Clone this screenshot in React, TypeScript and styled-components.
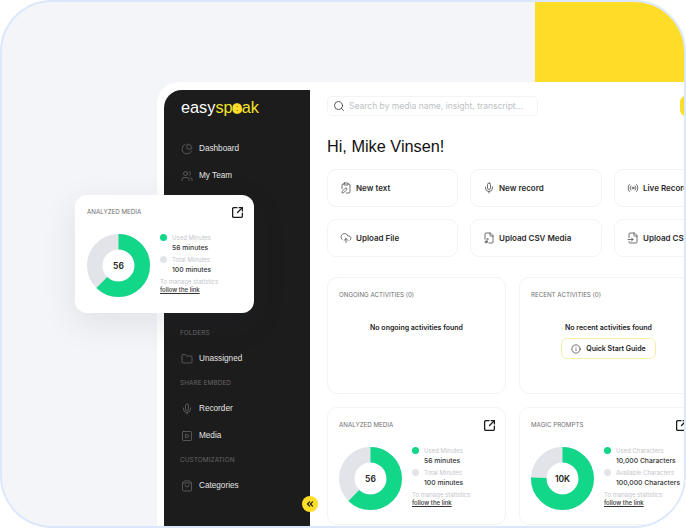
import React from "react";
import styled, { createGlobalStyle } from "styled-components";
import {
  ChevronsLeft,
  CloudUpload,
  FileMusic,
  FileInput,
  Folder,
  Info,
  Mic,
  PieChart,
  Radio,
  Search,
  ShoppingBag,
  SquareArrowOutUpRight,
  SquarePlay,
  ClipboardPen,
  Users,
} from "lucide-react";

const GlobalStyle = createGlobalStyle`
  html, body {
    margin: 0;
    padding: 0;
    background: #ffffff;
  }
  body {
    font-family: Inter, "Liberation Sans", sans-serif;
  }
  * {
    box-sizing: border-box;
  }
`;

const Frame = styled.div`
  position: relative;
  width: 686px;
  height: 528px;
  padding: 80px 0 0 155px;
  overflow: hidden;
  background: #f4f5f8;
  border: 2px solid #dbe8fb;
  border-radius: 52px;
`;

const YellowBlock = styled.div`
  position: absolute;
  top: 0;
  right: 0;
  width: 149px;
  height: 80px;
  background: #fedd29;
`;

const AppWindow = styled.div`
  position: relative;
  display: flex;
  width: 540px;
  height: 446px;
  padding: 8px 0 0 7px;
  background: #ffffff;
  border-top-left-radius: 22px;
`;

const Sidebar = styled.aside`
  flex: none;
  width: 146px;
  padding: 7px 0 0 16px;
  background: #1c1c1c;
  border-top-left-radius: 18px;
`;

const Logo = styled.div`
  height: 20px;
  padding-left: 1px;
  font-family: "Liberation Sans", sans-serif;
  font-size: 16.3px;
  line-height: 20px;
  color: #ffffff;
  span {
    color: #f3e32b;
  }
  b {
    font-weight: 700;
    color: #fedd29;
    -webkit-text-stroke: 1.6px #fedd29;
  }
`;

const NavItem = styled.div`
  display: flex;
  align-items: center;
  gap: 6px;
  height: 27px;
  padding-left: 1px;
  font-family: "Liberation Sans", sans-serif;
  font-size: 8.2px;
  color: #e4e4e4;
  svg {
    flex: none;
    width: 12px;
    height: 12px;
    color: #767676;
  }
`;

const NavGroup = styled.nav<{ $top: number }>`
  margin-top: ${(p) => p.$top}px;
`;

const NavLabel = styled.div`
  height: 23px;
  line-height: 23px;
  font-size: 6.4px;
  letter-spacing: 0.1px;
  color: #666666;
`;

const CollapseButton = styled.div`
  position: absolute;
  left: 145px;
  top: 414px;
  display: flex;
  align-items: center;
  justify-content: center;
  width: 16px;
  height: 16px;
  border-radius: 50%;
  background: #fedd29;
  color: #1c1c1c;
  svg {
    width: 10px;
    height: 10px;
  }
`;

const Main = styled.main`
  flex: none;
  width: 387px;
  padding: 6px 0 0 17px;
`;

const TopBar = styled.div`
  display: flex;
  align-items: center;
  gap: 142px;
`;

const SearchBox = styled.div`
  display: flex;
  align-items: center;
  gap: 4px;
  flex: none;
  width: 211px;
  height: 20px;
  padding-left: 5px;
  background: #ffffff;
  border: 1px solid #f2f3f5;
  border-radius: 5px;
  font-size: 8.5px;
  white-space: nowrap;
  color: #bcbfc4;
  svg {
    flex: none;
    width: 12px;
    height: 12px;
    color: #333333;
  }
`;

const NotifyPill = styled.div`
  flex: none;
  width: 30px;
  height: 20px;
  background: #fedd29;
  border-radius: 6px;
`;

const Greeting = styled.h1`
  margin: 19px 0 12px;
  font-family: "Liberation Sans", sans-serif;
  font-size: 16.3px;
  line-height: 22px;
  font-weight: 400;
  color: #111111;
`;

const ActionGrid = styled.div`
  display: grid;
  grid-template-columns: 131px 132px 132px;
  grid-auto-rows: 38px;
  gap: 12px;
`;

const ActionCard = styled.div`
  display: flex;
  align-items: center;
  gap: 4px;
  padding-left: 12px;
  overflow: hidden;
  background: #ffffff;
  border: 1px solid #f2f3f5;
  border-radius: 9px;
  font-size: 8px;
  font-weight: 600;
  white-space: nowrap;
  color: #2b2b2b;
  svg {
    flex: none;
    width: 12px;
    height: 12px;
    color: #444444;
  }
`;

const PanelGrid = styled.div`
  display: grid;
  grid-template-columns: 179px 179px;
  grid-template-rows: 117px 118px;
  gap: 13px;
  margin-top: 20px;
`;

const Panel = styled.section`
  padding: 12px 11px;
  background: #ffffff;
  border: 1px solid #f2f3f5;
  border-radius: 10px;
`;

const PanelTitle = styled.div`
  font-size: 6.2px;
  line-height: 10px;
  color: #707070;
`;

const EmptyState = styled.div`
  display: flex;
  flex-direction: column;
  align-items: center;
  margin-top: 22px;
  font-size: 7px;
  line-height: 12px;
  font-weight: 600;
  color: #222222;
`;

const GuideButton = styled.div`
  display: flex;
  align-items: center;
  justify-content: center;
  gap: 5px;
  width: 95px;
  height: 21px;
  margin-top: 4px;
  border: 1px solid #f8edaa;
  border-radius: 6px;
  svg {
    width: 10px;
    height: 10px;
  }
`;

const StatCard = styled.section<{ $floating?: boolean }>`
  padding: 11px;
  background: #ffffff;
  border-radius: ${(p) => (p.$floating ? "12px" : "10px")};
  border: ${(p) => (p.$floating ? "none" : "1px solid #f2f3f5")};
  ${(p) =>
    p.$floating &&
    `
    position: absolute;
    left: 73px;
    top: 193px;
    width: 179px;
    height: 118px;
    padding: 11px 12px;
    box-shadow: 0 10px 34px rgba(40, 50, 80, 0.1);
  `}
`;

const StatHead = styled.div`
  display: flex;
  align-items: center;
  justify-content: space-between;
  height: 12px;
  svg {
    width: 13px;
    height: 13px;
    margin-right: -1.5px;
    color: #1a1a1a;
  }
`;

const StatBody = styled.div`
  display: flex;
  gap: 10px;
  margin-top: 16px;
`;

const DonutWrap = styled.div`
  position: relative;
  flex: none;
  width: 63px;
  height: 63px;
`;

const DonutValue = styled.div`
  position: absolute;
  inset: 0;
  display: flex;
  align-items: center;
  justify-content: center;
  font-size: 8.5px;
  font-weight: 600;
  color: #222222;
`;

const Legend = styled.div`
  margin-top: -1px;
  white-space: nowrap;
`;

const LegendLabel = styled.div<{ $on?: boolean }>`
  display: flex;
  align-items: center;
  gap: 5px;
  height: 8px;
  font-size: 6px;
  color: #c4c6ca;
  &::before {
    content: "";
    width: 7px;
    height: 7px;
    border-radius: 50%;
    background: ${(p) => (p.$on ? "#12d688" : "#e2e4ea")};
  }
`;

const LegendValue = styled.div`
  height: 12px;
  margin-bottom: 2px;
  padding-left: 12px;
  font-size: 6.8px;
  line-height: 14px;
  font-weight: 500;
  color: #333333;
`;

const LegendNote = styled.div`
  margin-top: 3px;
  font-size: 6px;
  line-height: 8px;
  color: #c4c6ca;
`;

const LegendLink = styled.div`
  font-size: 6px;
  line-height: 8px;
  font-weight: 500;
  color: #333333;
  text-decoration: underline;
`;

const Donut = ({ percent, value }: { percent: number; value: string }) => {
  const r = 23.75;
  const c = 2 * Math.PI * r;
  return (
    <DonutWrap>
      <svg width="63" height="63" viewBox="0 0 63 63">
        <circle cx="31.5" cy="31.5" r={r} fill="none" stroke="#e2e4ea" strokeWidth="15.5" />
        <circle
          cx="31.5"
          cy="31.5"
          r={r}
          fill="none"
          stroke="#12d688"
          strokeWidth="15.5"
          strokeDasharray={`${(c * percent) / 100} ${c}`}
          transform="rotate(-90 31.5 31.5)"
        />
      </svg>
      <DonutValue>{value}</DonutValue>
    </DonutWrap>
  );
};

type StatProps = {
  title: string;
  percent: number;
  value: string;
  usedLabel: string;
  used: string;
  totalLabel: string;
  total: string;
  floating?: boolean;
};

const Stat = (props: StatProps) => (
  <StatCard $floating={props.floating}>
    <StatHead>
      <PanelTitle>{props.title}</PanelTitle>
      <SquareArrowOutUpRight strokeWidth={2.4} />
    </StatHead>
    <StatBody>
      <Donut percent={props.percent} value={props.value} />
      <Legend>
        <LegendLabel $on>{props.usedLabel}</LegendLabel>
        <LegendValue>{props.used}</LegendValue>
        <LegendLabel>{props.totalLabel}</LegendLabel>
        <LegendValue>{props.total}</LegendValue>
        <LegendNote>To manage statistics</LegendNote>
        <LegendLink>follow the link</LegendLink>
      </Legend>
    </StatBody>
  </StatCard>
);

const minutes = {
  title: "ANALYZED MEDIA",
  percent: 62,
  value: "56",
  usedLabel: "Used Minutes",
  used: "56 minutes",
  totalLabel: "Total Minutes",
  total: "100 minutes",
};

export default function App() {
  return (
    <>
      <GlobalStyle />
      <Frame>
        <YellowBlock />
        <AppWindow>
          <Sidebar>
            <Logo>
              easy<span>sp</span>
              <b>e</b>
              <span>ak</span>
            </Logo>
            <NavGroup $top={18}>
              <NavItem>
                <PieChart strokeWidth={1.3} />
                Dashboard
              </NavItem>
              <NavItem>
                <Users strokeWidth={1.3} />
                My Team
              </NavItem>
            </NavGroup>
            <NavGroup $top={133}>
              <NavLabel>FOLDERS</NavLabel>
              <NavItem>
                <Folder strokeWidth={1.3} />
                Unassigned
              </NavItem>
              <NavLabel>SHARE EMBDED</NavLabel>
              <NavItem>
                <Mic strokeWidth={1.3} />
                Recorder
              </NavItem>
              <NavItem>
                <SquarePlay strokeWidth={1.3} />
                Media
              </NavItem>
              <NavLabel>CUSTOMIZATION</NavLabel>
              <NavItem>
                <ShoppingBag strokeWidth={1.3} />
                Categories
              </NavItem>
            </NavGroup>
          </Sidebar>
          <CollapseButton>
            <ChevronsLeft strokeWidth={3} />
          </CollapseButton>
          <Main>
            <TopBar>
              <SearchBox>
                <Search strokeWidth={1.6} />
                Search by media name, insight, transcript...
              </SearchBox>
              <NotifyPill />
            </TopBar>
            <Greeting>Hi, Mike Vinsen!</Greeting>
            <ActionGrid>
              <ActionCard>
                <ClipboardPen strokeWidth={1.5} />
                New text
              </ActionCard>
              <ActionCard>
                <Mic strokeWidth={1.5} />
                New record
              </ActionCard>
              <ActionCard>
                <Radio strokeWidth={1.5} />
                Live Record
              </ActionCard>
              <ActionCard>
                <CloudUpload strokeWidth={1.5} />
                Upload File
              </ActionCard>
              <ActionCard>
                <FileMusic strokeWidth={1.5} />
                Upload CSV Media
              </ActionCard>
              <ActionCard>
                <FileInput strokeWidth={1.5} />
                Upload CSV
              </ActionCard>
            </ActionGrid>
            <PanelGrid>
              <Panel>
                <PanelTitle>ONGOING ACTIVITIES (0)</PanelTitle>
                <EmptyState>No ongoing activities found</EmptyState>
              </Panel>
              <Panel>
                <PanelTitle>RECENT ACTIVITIES (0)</PanelTitle>
                <EmptyState>
                  No recent activities found
                  <GuideButton>
                    <Info strokeWidth={1.5} />
                    Quick Start Guide
                  </GuideButton>
                </EmptyState>
              </Panel>
              <Stat {...minutes} />
              <Stat
                title="MAGIC PROMPTS"
                percent={75}
                value="10K"
                usedLabel="Used Characters"
                used="10,000 Characters"
                totalLabel="Available Characters"
                total="100,000 Characters"
              />
            </PanelGrid>
          </Main>
        </AppWindow>
        <Stat {...minutes} floating />
      </Frame>
    </>
  );
}
